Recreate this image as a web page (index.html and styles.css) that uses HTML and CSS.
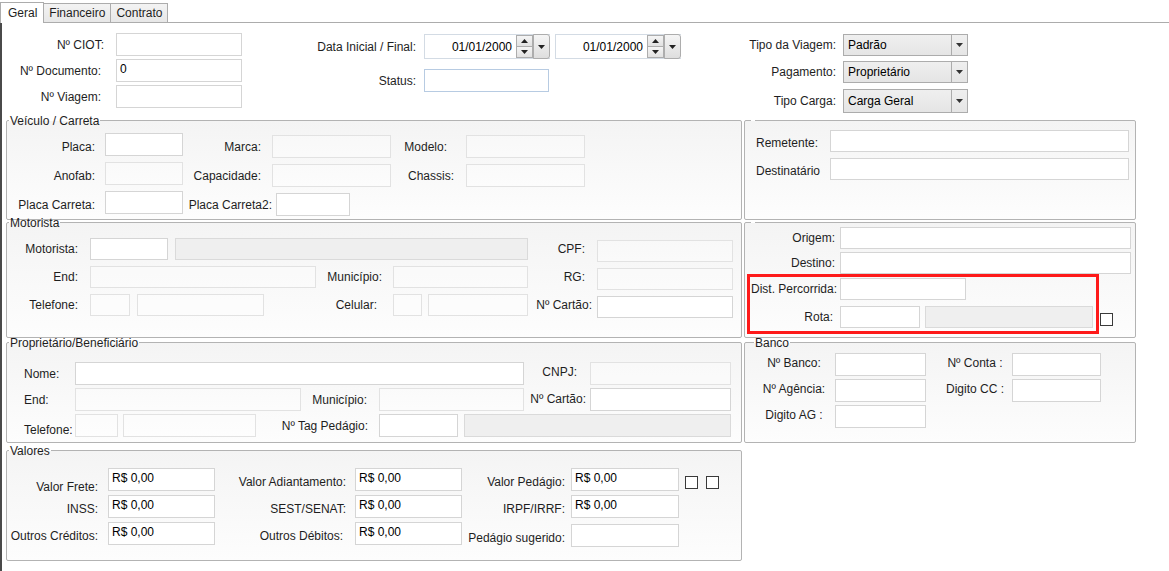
FILE: index.html
```html
<!DOCTYPE html>
<html lang="pt-BR">
<head>
<meta charset="utf-8">
<title>Viagem - Geral</title>
<link rel="stylesheet" href="styles.css">
</head>
<body>
<div class="tabs">
  <div class="tab active">Geral</div>
  <div class="tab">Financeiro</div>
  <div class="tab">Contrato</div>
</div>
<div class="panel">
  <div class="top">
    <div class="top-a">
      <span class="lbl lbl-first">Nº CIOT:</span><span class="tb"></span>
      <span class="lbl">Nº Documento:</span><span class="tb">0</span>
      <span class="lbl">Nº Viagem:</span><span class="tb"></span>
    </div>
    <div class="top-b">
      <span class="lbl">Data Inicial / Final:</span>
      <div class="dates">
        <div class="dp">
          <span class="dp-text">01/01/2000</span>
          <span class="spin">
            <span class="spin-btn"><svg width="7" height="4" viewBox="0 0 7 4"><path d="M0 4L3.5 0L7 4Z" fill="#222"/></svg></span>
            <span class="spin-btn"><svg width="7" height="4" viewBox="0 0 7 4"><path d="M0 0H7L3.5 4Z" fill="#222"/></svg></span>
          </span>
          <span class="dp-drop"><svg width="7" height="4" viewBox="0 0 7 4"><path d="M0 0H7L3.5 4Z" fill="#222"/></svg></span>
        </div>
        <div class="dp">
          <span class="dp-text">01/01/2000</span>
          <span class="spin">
            <span class="spin-btn"><svg width="7" height="4" viewBox="0 0 7 4"><path d="M0 4L3.5 0L7 4Z" fill="#222"/></svg></span>
            <span class="spin-btn"><svg width="7" height="4" viewBox="0 0 7 4"><path d="M0 0H7L3.5 4Z" fill="#222"/></svg></span>
          </span>
          <span class="dp-drop"><svg width="7" height="4" viewBox="0 0 7 4"><path d="M0 0H7L3.5 4Z" fill="#222"/></svg></span>
        </div>
      </div>
      <span class="lbl">Status:</span><span class="tb tb-status"></span>
    </div>
    <div class="top-c">
      <span class="lbl">Tipo da Viagem:</span>
      <div class="cb"><span class="cb-text">Padrão</span><span class="cb-btn"><svg width="7" height="4" viewBox="0 0 7 4"><path d="M0 0H7L3.5 4Z" fill="#333"/></svg></span></div>
      <span class="lbl">Pagamento:</span>
      <div class="cb"><span class="cb-text">Proprietário</span><span class="cb-btn"><svg width="7" height="4" viewBox="0 0 7 4"><path d="M0 0H7L3.5 4Z" fill="#333"/></svg></span></div>
      <span class="lbl">Tipo Carga:</span>
      <div class="cb cb-last"><span class="cb-text">Carga Geral</span><span class="cb-btn"><svg width="7" height="4" viewBox="0 0 7 4"><path d="M0 0H7L3.5 4Z" fill="#333"/></svg></span></div>
    </div>
  </div>

  <div class="groups">
    <div class="grow r1">
      <fieldset class="gb gb-left">
        <legend>Veículo / Carreta</legend>
        <div class="grid g-veic">
          <span class="lbl">Placa:</span><span class="tb"></span>
          <span class="lbl c3">Marca:</span><span class="tb dis dn"></span>
          <span class="lbl c5 l-modelo">Modelo:</span><span class="tb dis dn"></span>
          <span class="lbl">Anofab:</span><span class="tb dis"></span>
          <span class="lbl c3">Capacidade:</span><span class="tb dis dn"></span>
          <span class="lbl c5">Chassis:</span><span class="tb dis dn"></span>
          <span class="lbl">Placa Carreta:</span><span class="tb"></span>
          <span class="lbl l-carreta2">Placa Carreta2:</span><span class="tb tb-carreta2 dn"></span>
        </div>
      </fieldset>
      <fieldset class="gb gb-right">
        <legend></legend>
        <div class="grid g-rem">
          <span class="lbl">Remetente:</span><span class="tb"></span>
          <span class="lbl">Destinatário</span><span class="tb"></span>
        </div>
      </fieldset>
    </div>

    <div class="grow r2">
      <fieldset class="gb gb-left">
        <legend>Motorista</legend>
        <div class="grid g-mot">
          <span class="lbl">Motorista:</span>
          <div class="pair span3"><span class="tb w78"></span><span class="tb ro fill"></span></div>
          <span class="lbl c5">CPF:</span><span class="tb dis dn"></span>
          <span class="lbl">End:</span><span class="tb dis"></span>
          <span class="lbl c3">Município:</span><span class="tb dis"></span>
          <span class="lbl c5">RG:</span><span class="tb dis dn"></span>
          <span class="lbl">Telefone:</span>
          <div class="pair"><span class="tb dis w40"></span><span class="tb dis w127"></span></div>
          <span class="lbl l-cel">Celular:</span>
          <div class="pair pair-6"><span class="tb dis w29"></span><span class="tb dis fill"></span></div>
          <span class="lbl l-cartao">Nº Cartão:</span><span class="tb dn"></span>
        </div>
      </fieldset>
      <fieldset class="gb gb-right gb-rota">
        <legend></legend>
        <div class="grid g-rota">
          <span class="lbl">Origem:</span><span class="tb"></span>
          <span class="lbl">Destino:</span><span class="tb"></span>
          <span class="lbl l-dist">Dist. Percorrida:</span><span class="tb w126"></span>
          <span class="lbl l-rota">Rota:</span>
          <div class="pair pair-5"><span class="tb w80"></span><span class="tb ro w168"></span><span class="chk chk-rota"></span></div>
        </div>
        <div class="highlight"></div>
      </fieldset>
    </div>

    <div class="grow r3">
      <fieldset class="gb gb-left">
        <legend>Proprietário/Beneficiário</legend>
        <div class="grid g-prop">
          <span class="lbl">Nome:</span><span class="tb span3"></span>
          <span class="lbl l-cnpj">CNPJ:</span><span class="tb dis"></span>
          <span class="lbl">End:</span><span class="tb dis"></span>
          <span class="lbl c3">Município:</span><span class="tb dis"></span>
          <span class="lbl l-cartao2">Nº Cartão:</span><span class="tb"></span>
          <span class="lbl low">Telefone:</span>
          <div class="pair pair-5"><span class="tb dis w43"></span><span class="tb dis w133"></span></div>
          <span class="lbl l-tag">Nº Tag Pedágio:</span>
          <div class="pair pair-6 span3"><span class="tb w79"></span><span class="tb ro fill"></span></div>
        </div>
      </fieldset>
      <fieldset class="gb gb-right">
        <legend class="lg-banco">Banco</legend>
        <div class="grid g-banco">
          <span class="lbl">Nº Banco:</span><span class="tb"></span>
          <span class="lbl c3">Nº Conta :</span><span class="tb"></span>
          <span class="lbl">Nº Agência:</span><span class="tb"></span>
          <span class="lbl c3">Digito CC :</span><span class="tb"></span>
          <span class="lbl">Digito AG :</span><span class="tb"></span>
        </div>
      </fieldset>
    </div>

    <div class="grow r4">
      <fieldset class="gb gb-left">
        <legend>Valores</legend>
        <div class="grid g-val">
          <span class="lbl low">Valor Frete:</span><span class="tb">R$ 0,00</span>
          <span class="lbl c3">Valor Adiantamento:</span><span class="tb">R$ 0,00</span>
          <span class="lbl c5">Valor Pedágio:</span>
          <div class="pair pair-6"><span class="tb w108">R$ 0,00</span><span class="chks"><span class="chk"></span><span class="chk"></span></span></div>
          <span class="lbl">INSS:</span><span class="tb">R$ 0,00</span>
          <span class="lbl c3">SEST/SENAT:</span><span class="tb">R$ 0,00</span>
          <span class="lbl c5">IRPF/IRRF:</span><span class="tb w108">R$ 0,00</span>
          <span class="lbl">Outros Créditos:</span><span class="tb">R$ 0,00</span>
          <span class="lbl c3 l-deb">Outros Débitos:</span><span class="tb">R$ 0,00</span>
          <span class="lbl c5 l-sug">Pedágio sugerido:</span><span class="tb w108 dn"></span>
        </div>
      </fieldset>
    </div>
  </div>
</div>
</body>
</html>
```

FILE: styles.css
```css
* { box-sizing: border-box; }
html, body { margin: 0; padding: 0; }
body {
  width: 1169px;
  height: 571px;
  overflow: hidden;
  background: #fff;
  font-family: "Liberation Sans", Arial, sans-serif;
  font-size: 12px;
  color: #1e1e1e;
}

/* tabs */
.tabs { display: flex; align-items: flex-end; height: 22px; }
.tab {
  height: 19px;
  line-height: 18px;
  padding: 0 5px;
  border: 1px solid #acacac;
  border-bottom: 0;
  background: linear-gradient(#f3f3f3, #e7e7e7);
  margin-left: -1px;
  white-space: nowrap;
}
.tab.active {
  height: 21px;
  line-height: 20px;
  padding: 0 6px 0 7px;
  margin: 0 0 -1px 0;
  background: #fff;
  position: relative;
  z-index: 1;
}

.panel {
  height: 549px;
  border-top: 1px solid #acacac;
  border-left: 2px solid #4a4a4a;
}

/* generic controls */
.lbl {
  display: flex;
  align-items: center;
  justify-content: flex-end;
  white-space: nowrap;
}
.tb {
  display: block;
  border: 1px solid #d5d5d5;
  background: #fff;
  padding: 1px 3px;
  line-height: 16px;
  white-space: nowrap;
  overflow: hidden;
  color: #000;
}
.tb.dis { background: rgba(255, 255, 255, 0.35); border-color: #e2e2e2; }
.tb.ro { background: #efefef; border-color: #dadada; }
.tb.dn { margin-top: 2px; margin-bottom: -2px; }

.pair { display: flex; gap: 7px; }
.pair-5 { gap: 5px; }
.pair-6 { gap: 6px; }
.pair .fill { flex: 1; }
.span3 { grid-column: span 3; }
.w29 { width: 29px; } .w40 { width: 40px; } .w43 { width: 43px; }
.w78 { width: 78px; } .w79 { width: 79px; } .w80 { width: 80px; }
.w108 { width: 108px; } .w126 { width: 126px; } .w127 { width: 127px; }
.w133 { width: 133px; } .w168 { width: 168px; }

.chk {
  display: block;
  width: 13px;
  height: 13px;
  border: 1px solid #3a3a3a;
  background: #fff;
  flex: none;
}
.chks { display: flex; gap: 8px; margin-top: 8px; }

/* top section */
.top { display: flex; height: 97px; }
.top-a {
  display: grid;
  grid-template-columns: 102px 126px;
  grid-auto-rows: 23px;
  column-gap: 12px;
  row-gap: 3px;
  padding-top: 10px;
  align-content: start;
}
.top-a .lbl { padding-right: 3px; }
.top-a .lbl-first { padding-right: 0; }
.top-b {
  display: grid;
  grid-template-columns: 120px 257px;
  grid-template-rows: 25px 23px;
  column-gap: 8px;
  row-gap: 10px;
  padding-top: 11px;
  margin-left: 54px;
  align-content: start;
}
.tb-status { width: 125px; border-color: #b7cbe2; }
.dates { display: flex; gap: 5px; }
.dp {
  display: flex;
  width: 126px;
  height: 25px;
  border: 1px solid #d3dbe4;
  border-right: 0;
  background: #fff;
}
.dp-text {
  flex: 1;
  display: flex;
  align-items: center;
  justify-content: flex-end;
  padding-right: 4px;
  color: #000;
}
.spin { display: flex; flex-direction: column; width: 17px; }
.spin-btn {
  flex: 1;
  display: flex;
  align-items: center;
  justify-content: center;
  border: 1px solid #adadad;
  background: linear-gradient(#f5f5f5, #e1e1e1);
}
.spin-btn + .spin-btn { margin-top: -1px; }
.dp-drop {
  width: 17px;
  margin: -1px 0;
  display: flex;
  align-items: center;
  justify-content: center;
  border: 1px solid #adadad;
  border-radius: 0 3px 3px 0;
  background: linear-gradient(#f5f5f5, #dedede);
}
.top-c {
  display: grid;
  grid-template-columns: 100px 125px;
  grid-template-rows: 27px 28px 24px;
  column-gap: 7px;
  padding-top: 11px;
  margin-left: 55px;
  align-content: start;
  align-items: start;
}
.top-c .lbl, .top-c .cb { height: 22px; }
.top-c .cb-last, .top-c .lbl:nth-last-child(2) { height: 24px; }
.cb {
  display: flex;
  border: 1px solid #acacac;
  background: linear-gradient(#efefef, #e5e5e5);
  color: #000;
}
.cb-text { flex: 1; display: flex; align-items: center; padding-left: 4px; }
.cb-btn {
  width: 16px;
  border-left: 1px solid #acacac;
  display: flex;
  align-items: center;
  justify-content: center;
}

/* group boxes */
.groups { padding-left: 4px; }
.grow { display: flex; gap: 2px; }
.r1 { height: 100px; }
.r2 { height: 116px; margin-top: 2px; }
.r3 { height: 101px; margin-top: 4px; }
.r4 { height: 111px; margin-top: 7px; }
fieldset.gb {
  margin: 0;
  padding: 0;
  min-width: 0;
  border: 1px solid #b3b3b3;
  border-radius: 2px;
  background: linear-gradient(#f4f4f4, #fdfdfd);
  position: relative;
}
.gb-left { width: 736px; }
.gb-right { width: 392px; }
.gb legend {
  height: 0;
  line-height: 0;
  padding: 0 1px;
  margin-left: 2px;
  color: #1e1e1e;
}
.gb-right legend { margin-left: 6px; padding: 0 2px; }
.gb-right legend.lg-banco { margin-left: 9px; padding: 0 1px; }

.grid { display: grid; }

.g-veic {
  grid-template-columns: 98px 78px 89px 119px 75px 119px;
  grid-template-rows: repeat(3, 23px);
  row-gap: 6px;
  padding-top: 12px;
}
.g-veic .lbl { padding: 4px 10px 0 0; }
.g-veic .c3 { padding-right: 11px; }
.g-veic .c5 { padding-right: 12px; }
.g-veic .l-modelo { padding-right: 19px; }
.g-veic .l-carreta2 { padding-right: 0; }
.tb-carreta2 { width: 74px; margin-left: 4px; }

.g-rem {
  grid-template-columns: 74px 299px;
  grid-template-rows: 22px 22px;
  row-gap: 6px;
  padding: 9px 0 0 11px;
}
.g-rem .lbl { justify-content: flex-start; padding-top: 3px; }

.g-mot {
  grid-template-columns: 83px 226px 77px 135px 69px 136px;
  grid-template-rows: repeat(3, 22px);
  row-gap: 6px;
  padding-top: 15px;
}
.g-mot .lbl { padding-right: 12px; }
.g-mot .c3 { padding-right: 11px; }
.g-mot .l-cel { padding-right: 16px; }
.g-mot .c5 { padding-right: 12px; }
.g-mot .l-cartao { padding-right: 5px; }

.g-rota {
  grid-template-columns: 95px 291px;
  grid-template-rows: 25px 26px 28px 22px;
  padding-top: 4px;
  align-items: start;
}
.g-rota > * { height: 22px; }
.g-rota .lbl { padding-right: 5px; }
.g-rota .l-dist { padding-right: 3px; }
.g-rota .l-rota { padding-right: 7px; }
.chk-rota { margin: 7px 0 0 2px; }
.highlight {
  position: absolute;
  left: 2px;
  top: 51px;
  width: 352px;
  height: 60px;
  border: 3px solid #fe1a1a;
}

.g-prop {
  grid-template-columns: 68px 226px 78px 145px 66px 141px;
  grid-template-rows: repeat(3, 23px);
  row-gap: 3px;
  padding-top: 19px;
}
.g-prop .lbl { justify-content: flex-start; padding-left: 17px; }
.g-prop .lbl.low { align-items: flex-end; }
.g-prop .c3 { justify-content: flex-end; padding: 0 12px 0 0; }
.g-prop .l-tag { justify-content: flex-end; padding: 0 11px 0 0; }
.g-prop .l-cnpj { justify-content: flex-end; padding: 0 13px 3px 0; }
.g-prop .l-cartao2 { justify-content: flex-end; padding: 0 4px 2px 0; }

.g-banco {
  grid-template-columns: 90px 91px 86px 89px;
  grid-template-rows: repeat(3, 23px);
  row-gap: 3px;
  padding-top: 10px;
}
.g-banco .lbl { justify-content: center; padding: 0 0 3px 8px; }
.g-banco .c3 { padding-left: 12px; }

.g-val {
  grid-template-columns: 101px 107px 140px 107px 109px 159px;
  grid-template-rows: repeat(3, 23px);
  row-gap: 4px;
  padding-top: 17px;
}
.g-val .lbl { padding: 4px 10px 0 0; }
.g-val .lbl.low { padding-top: 15px; }
.g-val .c3 { padding-right: 9px; }
.g-val .l-deb { padding-right: 12px; }
.g-val .c5 { padding-right: 6px; }
.g-val .l-sug { padding-top: 9px; }
```
